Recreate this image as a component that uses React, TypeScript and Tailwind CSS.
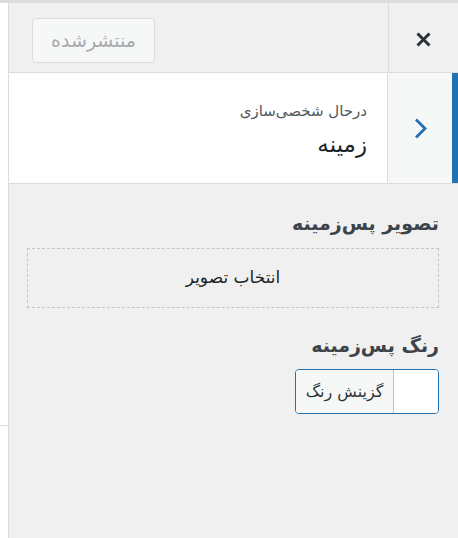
import React from "react";

export default function App() {
  const font = { fontFamily: '"DejaVu Sans", sans-serif' };
  return (
    <div dir="rtl" className="w-[458px] h-[538px] bg-white flex flex-col overflow-hidden" style={font}>
      <div className="h-[3px] bg-[#dcdcde] shrink-0" />
      <div className="flex flex-1 min-h-0">
        <div className="flex-1 flex flex-col bg-[#f0f0f1] border-l border-[#dcdcde]">
          {/* header */}
          <div className="h-[70px] flex items-stretch border-b border-[#dcdcde] shrink-0">
            <button className="w-[70px] flex items-center justify-center border-l border-[#dcdcde] text-[#1d2327] pt-[4px]">
              <svg width="17" height="17" viewBox="0 0 17 17">
                <path d="M2.5 2.5 L14.5 14.5 M14.5 2.5 L2.5 14.5" stroke="#2c3338" strokeWidth="3" strokeLinecap="butt" />
              </svg>
            </button>
            <div className="flex-1 flex items-center justify-end pl-[23px] pt-[6px]">
              <div className="w-[123px] h-[45px] flex items-center justify-center rounded-[4px] border border-[#dcdcde] bg-[#f6f7f7] text-[#a7aaad] text-[19px] leading-none">
                منتشرشده
              </div>
            </div>
          </div>
          {/* section title */}
          <div className="h-[111px] flex items-stretch border-b border-[#dcdcde] bg-white shrink-0">
            <div className="w-[71px] flex items-center justify-center bg-[#f6f7f7] border-l border-[#dcdcde] border-r-[6px] border-r-[#2271b1]">
              <svg width="13" height="21" viewBox="0 0 13 21">
                <path d="M2 1.5 L11 10.5 L2 19.5" stroke="#2271b1" strokeWidth="2.8" fill="none" />
              </svg>
            </div>
            <div className="flex-1 flex flex-col justify-center pr-[20px] pt-[4px]">
              <div className="text-[15px] text-[#50575e] leading-[20px]">درحال شخصی‌سازی</div>
              <div className="text-[23px] text-[#1d2327] leading-[30px] mt-[8px]">زمینه</div>
            </div>
          </div>
          {/* controls */}
          <div className="flex flex-col pr-[19px] pl-[18px] pt-[27px]">
            <div className="text-[19px] font-bold text-[#3c434a] leading-[24px]">تصویر پس‌زمینه</div>
            <div className="mt-[13px] h-[60px] border border-dashed border-[#c3c4c7] flex items-center justify-center text-[17px] text-[#1d2327]">
              انتخاب تصویر
            </div>
            <div className="text-[19px] font-bold text-[#3c434a] leading-[24px] mt-[25px]">رنگ پس‌زمینه</div>
            <div className="mt-[12px] flex">
              <div className="flex h-[45px] w-[144px] rounded-[4px] border border-[#2271b1] overflow-hidden">
                <div className="w-[45px] bg-white border-l border-[#c3c4c7]" />
                <div className="flex-1 bg-[#f6f7f7] flex items-center justify-center text-[16px] text-[#2c3338]">گزینش رنگ</div>
              </div>
            </div>
          </div>
        </div>
        <div className="w-[8px] bg-white flex flex-col">
          <div className="h-[423px] border-b border-[#dcdcde]" />
        </div>
      </div>
    </div>
  );
}
